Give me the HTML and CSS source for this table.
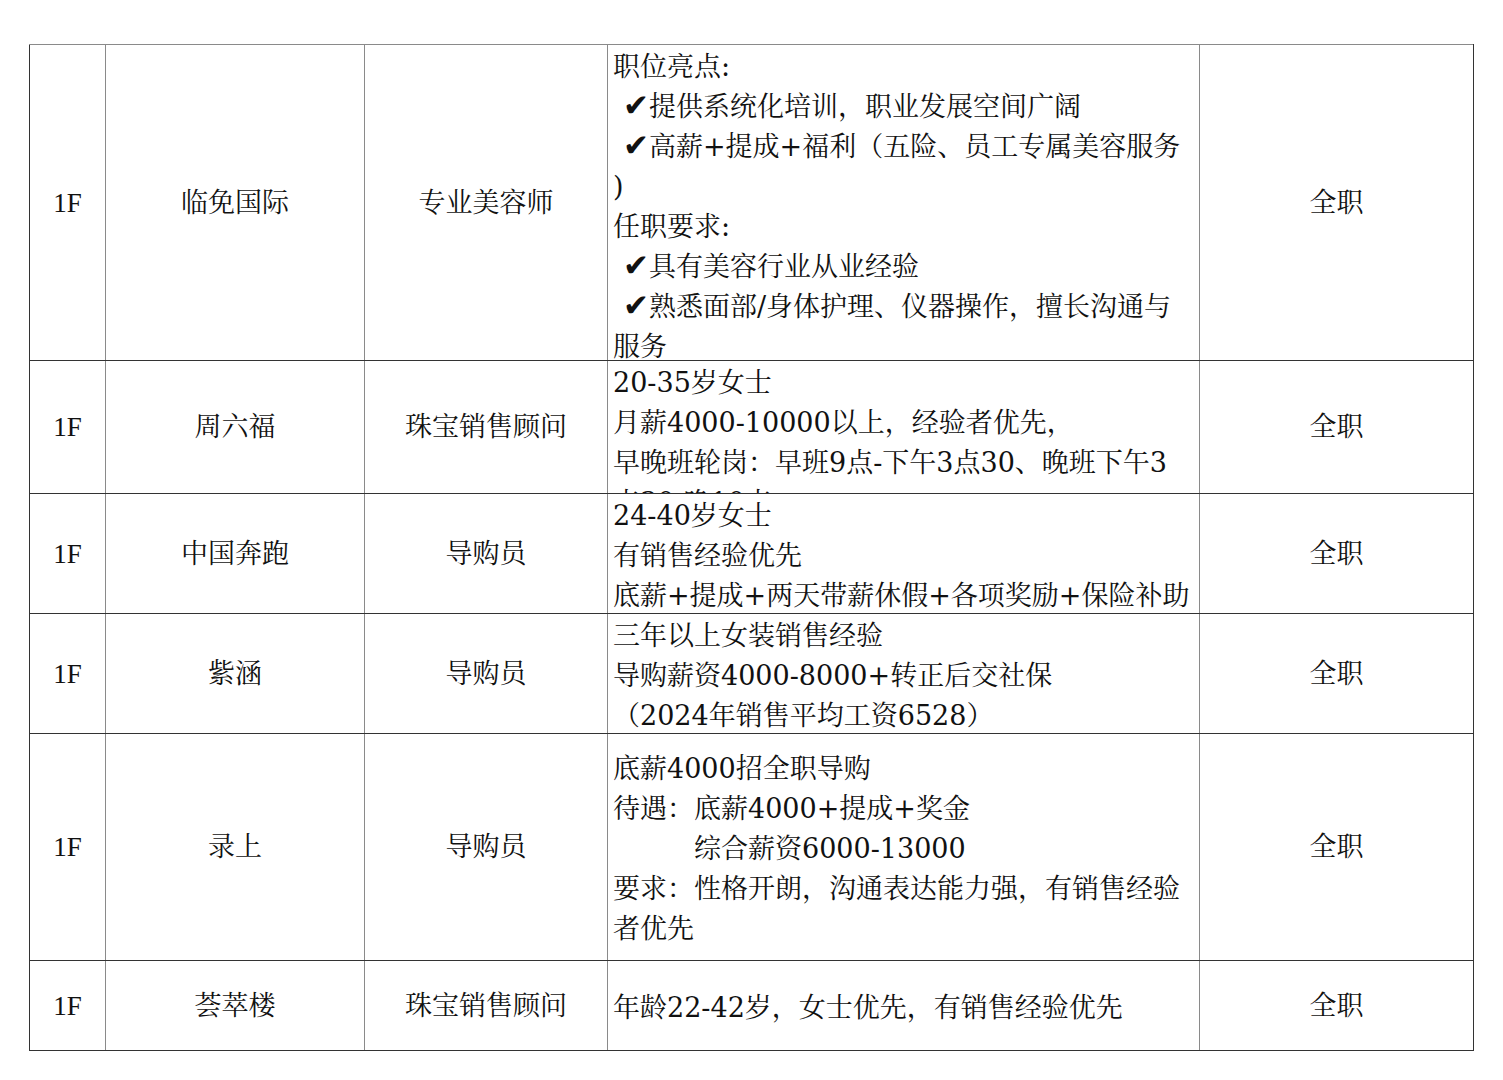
FILE: index.html
```html
<!DOCTYPE html>
<html lang="zh-CN">
<head>
<meta charset="utf-8">
<title>招聘信息</title>
<link rel="stylesheet" href="styles.css">
</head>
<body>
<table class="jobs">
  <colgroup>
    <col class="c-floor">
    <col class="c-shop">
    <col class="c-post">
    <col class="c-desc">
    <col class="c-type">
  </colgroup>
  <tbody>
    <tr class="r1">
      <td>1F</td>
      <td>临免国际</td>
      <td>专业美容师</td>
      <td class="desc top"><div class="clip">
        <div class="ln">职位亮点:</div>
        <div class="ln ind"><span class="chk">✔</span>提供系统化培训，职业发展空间广阔</div>
        <div class="ln ind"><span class="chk">✔</span>高薪+提成+福利（五险、员工专属美容服务</div>
        <div class="ln">)</div>
        <div class="ln">任职要求:</div>
        <div class="ln ind"><span class="chk">✔</span>具有美容行业从业经验</div>
        <div class="ln ind"><span class="chk">✔</span>熟悉面部/身体护理、仪器操作，擅长沟通与</div>
        <div class="ln">服务</div>
      </div></td>
      <td>全职</td>
    </tr>
    <tr class="r2">
      <td>1F</td>
      <td>周六福</td>
      <td>珠宝销售顾问</td>
      <td class="desc top"><div class="clip">
        <div class="ln">20-35岁女士</div>
        <div class="ln">月薪4000-10000以上，经验者优先，</div>
        <div class="ln">早晚班轮岗：早班9点-下午3点30、晚班下午3</div>
        <div class="ln">点30-晚10点</div>
      </div></td>
      <td>全职</td>
    </tr>
    <tr class="r3">
      <td>1F</td>
      <td>中国奔跑</td>
      <td>导购员</td>
      <td class="desc top"><div class="clip">
        <div class="ln">24-40岁女士</div>
        <div class="ln">有销售经验优先</div>
        <div class="ln">底薪+提成+两天带薪休假+各项奖励+保险补助</div>
      </div></td>
      <td>全职</td>
    </tr>
    <tr class="r4">
      <td>1F</td>
      <td>紫涵</td>
      <td>导购员</td>
      <td class="desc top"><div class="clip">
        <div class="ln">三年以上女装销售经验</div>
        <div class="ln">导购薪资4000-8000+转正后交社保</div>
        <div class="ln">（2024年销售平均工资6528）</div>
      </div></td>
      <td>全职</td>
    </tr>
    <tr class="r5">
      <td>1F</td>
      <td>录上</td>
      <td>导购员</td>
      <td class="desc"><div class="clip">
        <div class="ln">底薪4000招全职导购</div>
        <div class="ln">待遇：底薪4000+提成+奖金</div>
        <div class="ln sub">综合薪资6000-13000</div>
        <div class="ln">要求：性格开朗，沟通表达能力强，有销售经验</div>
        <div class="ln">者优先</div>
      </div></td>
      <td>全职</td>
    </tr>
    <tr class="r6">
      <td>1F</td>
      <td>荟萃楼</td>
      <td>珠宝销售顾问</td>
      <td class="desc"><div class="clip">
        <div class="ln">年龄22-42岁，女士优先，有销售经验优先</div>
      </div></td>
      <td>全职</td>
    </tr>
  </tbody>
</table>
</body>
</html>
```

FILE: styles.css
```css
html, body {
  margin: 0;
  padding: 0;
  background: #ffffff;
}

body {
  padding: 44px 0 0 29px;
  font-family: "Liberation Serif", "Noto Serif CJK SC", "Noto Sans CJK SC", serif;
  font-size: 27px;
  color: #111111;
}

.jobs {
  border-collapse: collapse;
  table-layout: fixed;
  width: 1444px;
}

.c-floor { width: 76px; }
.c-shop { width: 259px; }
.c-post { width: 243px; }
.c-desc { width: 592px; }
.c-type { width: 274px; }

.jobs td {
  border-left: 1.5px solid #8a8a8a;
  border-right: 1.5px solid #8a8a8a;
  border-top: 1.5px solid #333333;
  border-bottom: 1.5px solid #333333;
  padding: 0;
  text-align: center;
  vertical-align: middle;
  line-height: 40px;
  white-space: nowrap;
}

.jobs td:first-child { border-left-color: #333333; }
.jobs td:last-child { border-right-color: #333333; }
.jobs tr:first-child td { border-top-color: #8a8a8a; }

.jobs td.desc {
  text-align: left;
  padding: 0 0 0 5px;
  font-family: "DejaVu Serif", "Noto Serif CJK SC", "Noto Sans CJK SC", serif;
}

.jobs td.top { vertical-align: top; }

.r1 { height: 316px; }
.r2 { height: 133px; }
.r3 { height: 120px; }
.r4 { height: 120px; }
.r5 { height: 227px; }
.r6 { height: 90px; }

.r1 .clip { max-height: 314px; }
.r2 .clip { max-height: 132px; }
.r3 .clip, .r4 .clip { max-height: 118px; }

.clip {
  overflow: hidden;
}

.ln {
  height: 40px;
  padding-top: 2px;
  box-sizing: border-box;
}

.ln.ind { padding-left: 10px; }
.ln.sub { padding-left: 81px; }

.chk {
  font-size: 31px;
  line-height: 1;
}
```
